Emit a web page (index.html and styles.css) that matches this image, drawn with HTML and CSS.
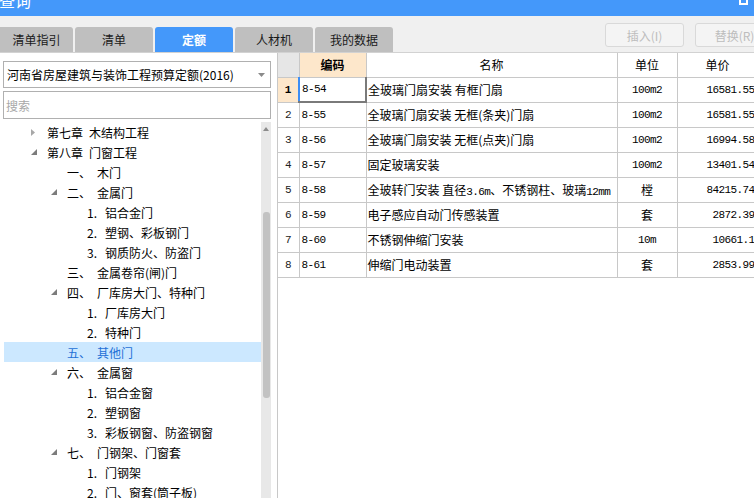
FILE: index.html
```html
<!DOCTYPE html>
<html lang="zh-CN">
<head>
<meta charset="utf-8">
<title>查询</title>
<link rel="stylesheet" href="styles.css">
</head>
<body>
<div class="app">
  <div class="titlebar"><span class="title">查询</span><span class="maxbox"></span></div>
  <div class="toolbar">
    <div class="tabs">
      <div class="tab tab-first">清单指引</div>
      <div class="tab">清单</div>
      <div class="tab active">定额</div>
      <div class="tab">人材机</div>
      <div class="tab">我的数据</div>
    </div>
    <div class="actions">
      <button class="btn" disabled>插入(I)</button>
      <button class="btn" disabled>替换(R)</button>
    </div>
  </div>
  <div class="main">
    <aside class="left">
      <div class="select">
        <span>河南省房屋建筑与装饰工程预算定额(2016)</span>
        <svg class="sel-arrow" width="7" height="4" viewBox="0 0 7 4"><path d="M0 0H7L3.5 4Z" fill="#8a8a8a"/></svg>
      </div>
      <div class="search">搜索</div>
      <div class="treewrap">
        <ul class="tree">
          <li class="row l0"><span class="tw"><svg width="4" height="7" viewBox="0 0 4 7"><path d="M0 0L4 3.5L0 7Z" fill="#a8a8a8"/></svg></span><span class="chap">第七章</span>木结构工程</li>
          <li class="row l0"><span class="tw"><svg width="6" height="6" viewBox="0 0 6 6"><path d="M6 0V6H0Z" fill="#7c7c7c"/></svg></span><span class="chap">第八章</span>门窗工程</li>
          <li class="row l1"><span class="tw"></span><span class="oc">一、</span>木门</li>
          <li class="row l1"><span class="tw"><svg width="6" height="6" viewBox="0 0 6 6"><path d="M6 0V6H0Z" fill="#7c7c7c"/></svg></span><span class="oc">二、</span>金属门</li>
          <li class="row l2"><span class="tw"></span><span class="on">1.</span>铝合金门</li>
          <li class="row l2"><span class="tw"></span><span class="on">2.</span>塑钢、彩板钢门</li>
          <li class="row l2"><span class="tw"></span><span class="on">3.</span>钢质防火、防盗门</li>
          <li class="row l1"><span class="tw"></span><span class="oc">三、</span>金属卷帘(闸)门</li>
          <li class="row l1"><span class="tw"><svg width="6" height="6" viewBox="0 0 6 6"><path d="M6 0V6H0Z" fill="#7c7c7c"/></svg></span><span class="oc">四、</span>厂库房大门、特种门</li>
          <li class="row l2"><span class="tw"></span><span class="on">1.</span>厂库房大门</li>
          <li class="row l2"><span class="tw"></span><span class="on">2.</span>特种门</li>
          <li class="row l1 selected"><span class="tw"></span><span class="oc">五、</span>其他门</li>
          <li class="row l1"><span class="tw"><svg width="6" height="6" viewBox="0 0 6 6"><path d="M6 0V6H0Z" fill="#7c7c7c"/></svg></span><span class="oc">六、</span>金属窗</li>
          <li class="row l2"><span class="tw"></span><span class="on">1.</span>铝合金窗</li>
          <li class="row l2"><span class="tw"></span><span class="on">2.</span>塑钢窗</li>
          <li class="row l2"><span class="tw"></span><span class="on">3.</span>彩板钢窗、防盗钢窗</li>
          <li class="row l1"><span class="tw"><svg width="6" height="6" viewBox="0 0 6 6"><path d="M6 0V6H0Z" fill="#7c7c7c"/></svg></span><span class="oc">七、</span>门钢架、门窗套</li>
          <li class="row l2"><span class="tw"></span><span class="on">1.</span>门钢架</li>
          <li class="row l2"><span class="tw"></span><span class="on">2.</span>门、窗套(筒子板)</li>
        </ul>
        <div class="vscroll"><span class="up"></span><span class="thumb"></span></div>
      </div>
    </aside>
    <section class="right">
      <table class="grid">
        <colgroup>
          <col class="c-rn"><col class="c-code"><col class="c-name"><col class="c-unit"><col class="c-price">
        </colgroup>
        <thead>
          <tr>
            <th class="rn-h"></th>
            <th class="code-h">编码</th>
            <th>名称</th>
            <th>单位</th>
            <th>单价</th>
          </tr>
        </thead>
        <tbody>
          <tr><td class="rn cur">1</td><td class="code focus">8-54</td><td class="name">全玻璃门扇安装 有框门扇</td><td class="unit m">100m2</td><td class="price m">16581.55</td></tr>
          <tr><td class="rn">2</td><td class="code">8-55</td><td class="name">全玻璃门扇安装 无框(条夹)门扇</td><td class="unit m">100m2</td><td class="price m">16581.55</td></tr>
          <tr><td class="rn">3</td><td class="code">8-56</td><td class="name">全玻璃门扇安装 无框(点夹)门扇</td><td class="unit m">100m2</td><td class="price m">16994.58</td></tr>
          <tr><td class="rn">4</td><td class="code">8-57</td><td class="name">固定玻璃安装</td><td class="unit m">100m2</td><td class="price m">13401.54</td></tr>
          <tr><td class="rn">5</td><td class="code">8-58</td><td class="name">全玻转门安装 直径<span class="m">3.6m</span>、不锈钢柱、玻璃<span class="m">12mm</span></td><td class="unit">樘</td><td class="price m">84215.74</td></tr>
          <tr><td class="rn">6</td><td class="code">8-59</td><td class="name">电子感应自动门传感装置</td><td class="unit">套</td><td class="price m">2872.39</td></tr>
          <tr><td class="rn">7</td><td class="code">8-60</td><td class="name">不锈钢伸缩门安装</td><td class="unit m">10m</td><td class="price m">10661.1</td></tr>
          <tr><td class="rn">8</td><td class="code">8-61</td><td class="name">伸缩门电动装置</td><td class="unit">套</td><td class="price m">2853.99</td></tr>
        </tbody>
      </table>
    </section>
  </div>
</div>
</body>
</html>
```
FILE: styles.css
```css
* { box-sizing: border-box; margin: 0; padding: 0; }
html, body { width: 754px; height: 498px; overflow: hidden; background: #fff; }
body { font-family: "Noto Sans CJK SC", "Noto Sans", sans-serif; font-size: 12px; color: #000; }

.app { display: flex; flex-direction: column; height: 498px; }

.titlebar { height: 16px; flex-shrink: 0; background: #4498fa; display: flex; overflow: hidden; }
.title { color: #fff; font-size: 16px; line-height: 20px; margin-top: -10px; margin-left: -1px; }
.maxbox { margin-left: auto; margin-right: 6px; margin-top: -7px; width: 9px; height: 12px; border: 2px solid #fff; }

.toolbar { height: 37px; flex-shrink: 0; background: #f0f0f0; border-bottom: 1px solid #d2d2d2; display: flex; align-items: flex-end; }
.tabs { display: flex; gap: 2px; }
.tab { width: 78px; height: 25px; background: #bfbfbf; border-radius: 3px 3px 0 0; display: flex; align-items: center; justify-content: center; color: #1a1a1a; font-size: 12px; line-height: 1; }
.tab-first { width: 73px; border-top-left-radius: 0; }
.tab.active { background: #4498fa; color: #fff; font-weight: bold; }

.actions { display: flex; gap: 11px; margin-left: auto; margin-right: -20px; align-self: flex-start; margin-top: 7px; }
.btn { width: 79px; height: 24px; border: 1px solid #d9d9d9; border-radius: 3px; background: #f4f4f4; color: #bdbdbd; font-family: inherit; font-size: 12px; }

.main { flex: 1; display: flex; min-height: 0; }

.left { width: 278px; flex-shrink: 0; border-right: 1px solid #c8c8c8; padding: 8px 0 0 3px; display: flex; flex-direction: column; }
.select { width: 268px; height: 27px; border: 1px solid #b0b0b0; display: flex; align-items: center; padding-left: 3px; white-space: nowrap; }
.sel-arrow { margin-left: auto; margin-right: 5px; }
.search { margin-top: 3px; width: 268px; height: 28px; border: 1px solid #b0b0b0; color: #a8a8a8; display: flex; align-items: center; padding-left: 2px; }

.treewrap { margin-top: 3px; flex: 1; min-height: 0; display: flex; overflow: hidden; padding-left: 1px; }
.tree { list-style: none; width: 257px; padding-top: 0; }
.row { height: 20px; display: flex; align-items: center; white-space: nowrap; }
.l0 { padding-left: 27px; }
.l1 { padding-left: 47px; }
.l2 { padding-left: 67px; }
.tw { width: 16px; flex-shrink: 0; display: flex; align-items: center; }
.chap { margin-right: 6px; }
.oc { width: 30px; flex-shrink: 0; }
.on { width: 18px; flex-shrink: 0; }
.row.selected { background: #cce8ff; color: #1f70d6; }

.vscroll { width: 10px; flex-shrink: 0; background: #e8e8e8; display: flex; flex-direction: column; align-items: center; }
.up { margin-top: 5px; width: 0; height: 0; border-left: 3px solid transparent; border-right: 3px solid transparent; border-bottom: 4px solid #8c8c8c; }
.thumb { margin-top: 81px; width: 7px; height: 186px; background: #c2c2c2; border-radius: 3px; }

.right { flex: 1; overflow: hidden; }
.grid { border-collapse: collapse; table-layout: fixed; width: 480px; }
.c-rn { width: 21px; }
.c-code { width: 67px; }
.c-name { width: 251px; }
.c-unit { width: 60px; }
.c-price { width: 81px; }
.grid th, .grid td { border: 1px solid #c8c8c8; white-space: nowrap; overflow: hidden; }
.grid th { height: 24px; border-top: none; font-weight: normal; text-align: center; }
.grid td { height: 25px; }
.grid th:first-child, .grid td:first-child { border-left: none; }
.rn-h { background: #e6e6e6; }
.code-h { background: #fde7cb; font-weight: bold !important; }
.m { font-family: "Liberation Mono", monospace; font-size: 11px; letter-spacing: -0.6px; }
.rn { text-align: center; font-family: "Liberation Mono", monospace; font-size: 11px; color: #222; }
.rn.cur { background: #fde7cb; font-weight: bold; color: #000; }
.code { padding-left: 2px; font-family: "Liberation Mono", monospace; font-size: 11px; letter-spacing: -0.6px; }
.code.focus { border-left: 2px solid #3d8ef5; border-right: 2px solid #7a7a7a; border-bottom: 2px solid #7a7a7a; }
.name { padding-left: 1px; }
.unit { text-align: center; }
.price { text-align: right; padding-right: 3px; }
```
